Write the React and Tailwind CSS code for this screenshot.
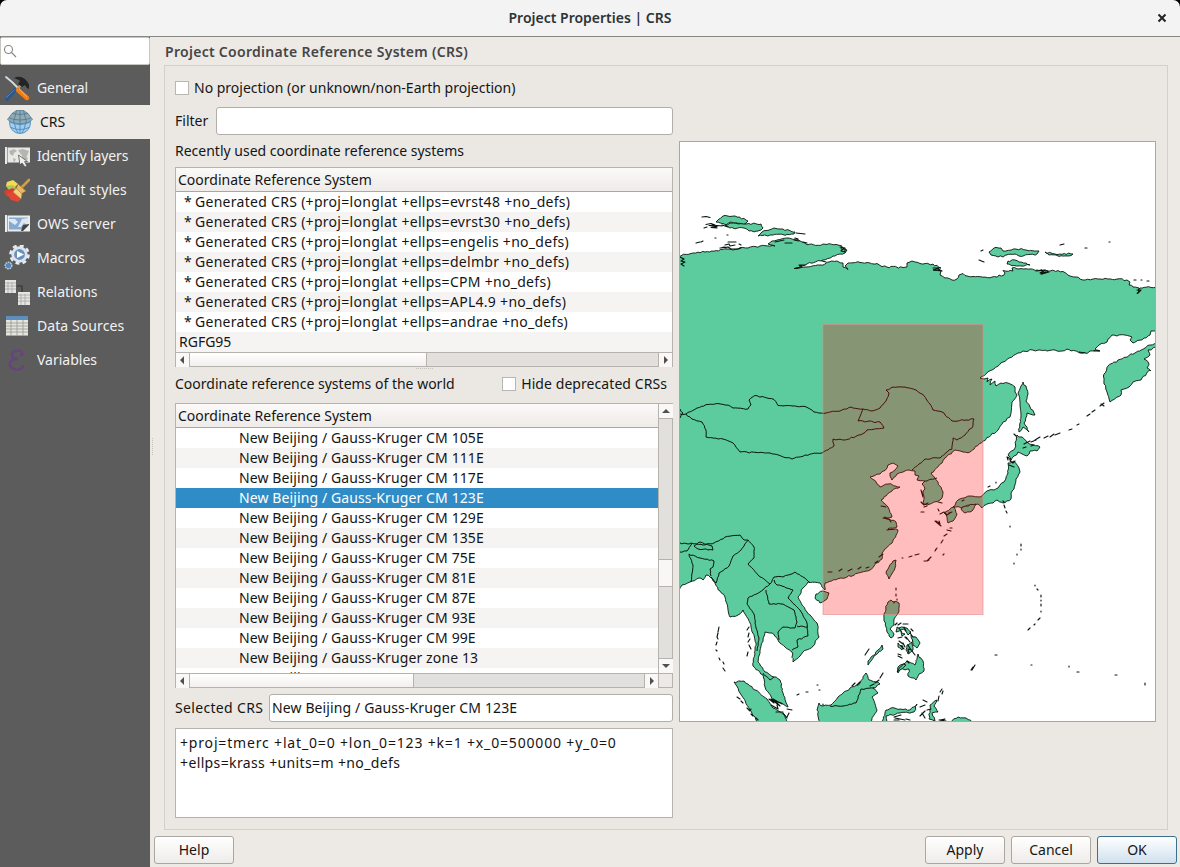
import React from "react";

const recent = ["evrst48", "evrst30", "engelis", "delmbr", "CPM", "APL4.9", "andrae"];
const world = ["CM 105E", "CM 111E", "CM 117E", "CM 123E", "CM 129E", "CM 135E", "CM 75E", "CM 81E", "CM 87E", "CM 93E", "CM 99E", "zone 13", "zone 14"];

/* Turns a coarse outline into a slightly ragged coastline. */
function rough(text, amount = 1.1, close = true) {
  const pts = text.trim().split(/\s+/).map((p) => p.split(",").map(Number));
  let seed = 7;
  const rnd = () => {
    seed = (seed * 16807) % 2147483647;
    return seed / 2147483647 - 0.5;
  };
  const out = [];
  const n = pts.length;
  for (let i = 0; i < (close ? n : n - 1); i++) {
    const [ax, ay] = pts[i];
    const [bx, by] = pts[(i + 1) % n];
    out.push(`${ax},${ay}`);
    const steps = Math.floor(Math.hypot(bx - ax, by - ay) / 2.2);
    if ((ax <= 680 && bx <= 680) || (ay >= 721 && by >= 721) || (ax >= 1155 && bx >= 1155)) continue;
    for (let k = 1; k < steps; k++) {
      const t = k / steps;
      out.push(`${(ax + (bx - ax) * t + rnd() * amount).toFixed(1)},${(ay + (by - ay) * t + rnd() * amount * 1.5).toFixed(1)}`);
    }
  }
  if (!close) out.push(pts[n - 1].join(","));
  return "M" + out.join("L") + (close ? "Z" : "");
}

const mainland = `679,255.7 693,253 705,252 727,249 733,250 740,247.7 748,248 760,246 775,246 768,244 772,241 780,239.5 787,238 797,239 802,242 807,244.7 827,244.5 838,245 842,246 841,249 847,250 845,253 840,254 833,256 823,260 807,264 794,268.5 806,267 820,265 829,262 837,261 843,263 843,267 848,269.5 845,266 848,263 860,262.5 877,263.5 882,266.7 903,267.5 907,267 907,263 912,261 920,263.5 933,264 941,268 933,270 941,271 940,275 945,278 952,280 957,279 959,275 963,273.5 967,276 973,276.5 992,277 1004,275 1005,273 1003,270.5 1013,271 1012,268 1037,270 1048,271 1041,274 1050,271 1063,271.5 1070,276 1076,277 1083,280 1100,279 1117,279 1127,280 1130,282 1129,285 1133,287 1139,288 1137,294 1140,288 1156,287 1156,331 1151,331 1150,335 1144,338 1133,343 1130,340 1132,337 1125,335 1117,336 1112,335 1107,342 1099,345 1095,349 1100,351 1090,351 1087,353.5 1078,352 1067,349 1062,351 1055,350 1047,351 1040,350 1023,351 1018,353 1003,362 992,370 980,378 984,379 988,378 987,382 992,379 990,385 995,381 996,386 1001,383 1008,383 1015,387 1015,392 1017,395 1012,402 1010,417 1003,422 998,430 983,441 970,452 963,452 955,450 945,458 942,463 931,473 938,482 943,492 942,498 940,500 934,502 930,504 927,505 923,503 924,497 923,491 925,489 922,484 925,481 917,480 919,476 915,475 915,471 909,470 903,472 897,474 892,480 890,476 890,473 895,470 898,466 893,463 888,465 887,468 880,474 870,477 874,480 880,487 888,484 900,487 892,491 881,500 888,507 892,517 884,517 896,522 897,527 888,529 898,530 892,543 882,553 882,559 870,570 847,577 825,583 825,590 822,587 820,583 808,582 803,588 798,597 807,612 817,623 819,637 813,646 803,652 800,656 793,662 792,652 785,647 778,640 772,633 765,632 760,650 758,662 765,672 780,680 783,693 788,707 783,704 773,700 765,687 763,675 753,666 756,643 750,623 743,610 738,615 730,617 725,597 720,591 710,577 706,575 703,580 699,578 690,582 682,585 679,590`;

const islands = [
  "719,219 723,216 735,216 748,221 745,224 731,222 726,225 716,222",
  "725,225 733,223 746,224 761,224 763,228 758,231 749,231 744,228 730,228",
  "758,236 762,232 774,228 780,229 795,232 794,234 770,235",
  "989,252 994,248 1001,248 1003,251 1016,249 1026,250 1039,251 1037,254 1019,256 1015,254 998,257 991,255",
  "1045,252 1055,254 1073,254 1068,256 1049,255",
  "1008,261 1015,260 1030,265 1018,266 1007,264",
  "1156,343 1150,345 1135,353 1118,360 1108,366 1104,374 1104,384 1107,392 1110,402 1121,395 1121,390 1129,387 1133,382 1141,380 1142,378 1150,370 1151,371 1147,368 1149,364 1146,360 1144,359 1150,355 1148,350 1156,347",
  "1023,382 1026,386 1028,394 1026,401 1030,407 1035,415 1027,413 1024,423 1029,432 1023,427 1019,432 1021,415 1020,402 1018,393 1021,386",
  "1017,435 1022,437 1028,443 1040,447 1037,451 1030,451 1027,456 1018,452 1014,456 1011,460 1008,455 1015,448",
  "1008,463 1014,461 1019,468 1020,472 1016,479 1014,489 1011,493 1011,499 1003,503 997,500 993,503 987,504 982,508 978,504 970,505 961,508 953,507 958,500 970,496 980,497 987,491 998,488 1004,482 1008,473",
  "966,506 976,504 972,511 965,513 961,509",
  "947,511 954,507 957,514 953,521 948,523 947,517 944,513",
  "888,569 893,561 896,560 895,568 889,579 886,573",
  "816,594 823,591 829,593 827,599 820,603 815,598",
  "888,602 891,600 899,603 899,611 894,619 894,625 890,629 894,634 891,638 887,632 884,619 884,614",
  "897,627 907,628 911,632 908,635 904,629 896,632", "915,637 918,642 915,646 912,638",
  "898,643 903,646 902,650 898,647", "907,645 912,642 913,650 908,654 906,650",
  "918,654 923,661 924,671 919,674 916,680 908,676 909,669 900,669 898,673 898,667 907,661 915,665",
  "882,645 883,649 874,656 868,665 868,661 878,650",
  "734,682 744,681 755,690 767,699 773,708 785,715 787,722 757,722 750,710 740,693",
  "819,703 823,706 831,705 838,697 850,688 860,683 866,673 869,680 880,684 873,688 878,693 872,697 877,710 870,722 820,722 817,710",
  "886,710 891,708 910,710 917,704 914,712 900,713 886,716 887,722 882,722",
  "930,705 937,700 934,706 938,712 932,713 935,721 929,719", "950,722 958,717 966,718 972,722",
  "911,635 916,637 920,643 917,648 913,645", "901,631 905,634 902,636", "897,672 903,664 906,665 900,670",
];

const borders = [
  "680,409 683,413 680,418", "680,414 686,414 697,408 708,404.5 718,403.5 728,405 733,408 748,409 751,405 749,400 755,395.5 774,399.5 778,405.5 793,406 805,406.5 814,412 826,413 840,411 851,407 863,409 872,411 880,408 886,401 889,393 886,390 893,387 905,387 916,390 922,394 930,404 933,410 942,412 952,421 966,420 974,419 973,426 965,435 957,440 953,438 952,449 947,452 940,458 925,459 919,464 912,470",
  "686,414 692,419 702,422 706,430 706,437 723,439 733,443 740,452 770,453 792,459 805,455 822,453 834,446 833,439 845,440 860,435 867,430 884,428 880,422 858,421 863,409",
  "925,481 937,478", "680,543 689,544 691,543 703,545 714,543 725,537 740,535 744,540 748,540 754,547 754,558 748,564 758,575 770,584 774,577 783,577 795,572 807,580 810,583",
  "694,546 700,542 712,546 713,550 698,549 694,546", "680,552 687,551 692,543", "689,554 700,558 714,561 713,567 710,569 711,576", "689,554 693,565 691,582", "748,540 741,550 733,556 729,566 719,573 716,583 711,577",
  "770,584 760,592 748,598 747,604 754,614 756,628 759,638 757,651", "766,590 769,604 783,604 794,610 797,622 795,628 783,627 778,632 779,640", "774,580 777,585 782,586 793,590 788,598 800,610 807,623 808,636 797,640 798,647 792,650", "797,626 808,627", "763,673 770,680 774,677", "830,706 843,706 856,703 861,689 874,688",
];

const specks = "M702 217l4-.5 4 1m-4 7l5-1 4 1.5-6 .5 8 1-6 1 6 .5-5-3 10 1m-18 2l3-1m15-2 6 2m-32 16 4-1m1 0 2-1m12-3h1m11-3h1m-7 13 3-1 2 1m-1-3 4-1 1 2 5-1m-7-3 8 0m-16 6 8-1 3 2 7 0 3-1m-2-4 2 1m34-3 9-2m1 3 7 0m2-3 5 1m-4-3 3 1m5 3 4 1m-11-10 9 1M680 257l4 2-3 2 4 1-4 2 3 2M840 247l5 1 0 4-4-1 3-3M796 268l6-1-3-2 6 0M822 261l4 1M981 251l2-1m-4 10 5 2m76-17 4-1m21 4h2m22-6h1m24 38h2m5 0h1m5 1h2M933 268l6 0-5 2 8 1-6-3M1036 271l9-1-5 3 9-1-8 2M1137 290l4 0-3 3M1079 352l6 1m9-2 5 0M1104 403l-4 3m1-2 3 2m-9 4-3 2m-2 2-3 2m-8 8-2 1m-5 4-3 1m-9 3-5 2m-1-1-4 3m-2-1-4 2m-4-1-5 3m1 0-5 2m-1-1-6 3m10 1-3 1m-5 1-3 1M1007 457l1 3m2 1 3 2 2-2m-7-4 3 4m-2 4 5 2M1014 434l2 2M988 487l2-1m6-4v1M921 490l2 7-1-5m-1 10 3 3 4-2m-4 4 3-1m11-4 4 1m-21 9 3 0m14-3 1 2m25-11-2 1m-10 11-3 1m-13 8 4 3-1-3m-4 0 6 5m6 4 4 1m-1-3 2 0m-5 6-3 2m-1 4-2 3m-4 5-2 3 1-2m-5 8-4 4 2-1m-5 1 3 0m17-7-1 1m-3-41 4-2 3 3 3-2M1003 501l1 1m0 3 1 3m1 3 1 2m3 13v1m11 17v2m0 3v1m-4 4v1m-3 8v1m21 21v1m2 3 1 1m3 5v2m0 3v1m0 3v2m0 5v1m-1 6-2 2m-3 4-1 1m-4 3-2 2M995 655h2m34 10h1m-57 0-3 5m1-3-2 3m98-4v1m8 5 2 0m36 3h2m28 8v2M896 588v2m0 4v2m1 3v1m-3 2v1m8-45h1m6-1 3-1m3-1 4-1M719 627l-1 5m0 1-1 4 1 2m-1 3-1 3m0 5 1 1m2 7 1 2m3 2 1 2m-1 4 2 3m24-44-2 3m2 3-1 4m2 2-2 3m1 3 2 4m-3 3-1 4M737 697l3 2m1 2 2 2m4 5 3 3 1-2m0 5 2 2m3 2 2 2M769 699l5 4-3-4 9 7-7-7 9 5m-11 1 7 4-1-4m-1 7 7 0m4-3 5 1m-3 3-2 4m-4-4 4 5m10-23 2-1m7-2h2m9-7h1m1 5h1m3 14v1M852 686l3-3m2 2 3-3m9-33-4 6M895 625l2-2m1 2 3-2m2 1 5 0m-9 4 2 3m3-4 2 4m5-2 2 2m-15 7 4-1m3 0 2 2m-8 2 4 3m3-7 4 5m0-9 3 4m-10 6 2 4m3-2 3 5m-10-4 3 3m-6 5 3 1m7-5 1 3m3-2 3 4m-7-6 4 1m-14 6 4 2m5 3 2 2m-26 10-3 5m-1 2-4 3m-1 1-4 2m72 3-2 3m-1 4-1 5m5-10-1 3M894 717l7-2m-6 3 10 2m-11 0 5 0m7-1 4 1m13-20 4 2m-2 3-5 2m5 4-5 5m2-3 3 5m2-8 4-1m9 11 5-1-4 2m-2-1 7 1m15 2 5 1m2 1 3 1M881 506l5 1m-3 11 6 1 2 3m-4 8 6-1m-14 28 4-3m-8 9 3-2m-9 6-3 1m-5-1-3 2m-6 0-4 2m-6-2-3 2m-7 1-4 0";

function WorldMap() {
  return (
    <svg className="block h-full w-full" viewBox="680 142 475 579">
      <g fill="#5ccb9d" stroke="#08150f" strokeWidth="0.9" strokeLinejoin="round">
        <path d={rough(mainland, 1.2)} />
        {islands.map((d) => <path key={d} d={rough(d, 1.4)} />)}
        <g fill="none" strokeWidth="1">{borders.map((d) => <path key={d} d={rough(d, 0.9, false)} />)}</g>
        <path d={specks} fill="none" strokeWidth="1.15" strokeLinecap="round" />
      </g>
      <rect x="823" y="324.5" width="160" height="290" fill="#ff0000" fillOpacity="0.26" stroke="#e58888" strokeOpacity="0.6" strokeWidth="1" />
    </svg>
  );
}

const Icon = ({ children }) => <svg viewBox="0 0 26 26" className="h-[26px] w-[26px] shrink-0">{children}</svg>;

const icons = {
  General: <Icon><path d="M2 2 8 7 15 14" stroke="#d8dcde" strokeWidth="1.8" fill="none" strokeLinecap="round" /><path d="m18 9-5 5" stroke="#b9a27c" strokeWidth="2.2" /><path d="M10 3c5-3 12-1 15 7v4l-2-1-2-3-3 2-4-3 2-3c-2-2-4-2-6-3z" fill="#242424" /><path d="m11 15-8 9" stroke="#245a91" strokeWidth="3.8" strokeLinecap="round" /><path d="m10 15-8 8" stroke="#5189bb" strokeWidth=".9" /><path d="m14 15 9 8" stroke="#f47e13" strokeWidth="4.4" strokeLinecap="round" /><path d="m15 14 8 8" stroke="#ffb05d" strokeWidth="1" /></Icon>,
  CRS: <Icon><circle cx="13" cy="14" r="10.5" fill="#9fcdf0" stroke="#5b95c2" /><path d="M3 13q10 5 20 0M4 18.5q9 4 18 0M7.5 14q.5 6 3.5 10M18.500 14q-.5 6-3.500 10M13 15v9" fill="none" stroke="#4584b5" strokeWidth=".8" /><path d="M.5 10.500 5 4.500 9.500 1.500h7l4.500 3 4.500 6-4.500 3-8 1.500-8-1.500z" fill="#8eabb9" stroke="#5c7f92" strokeWidth=".8" /><path d="m9.500 1.500-3 12m10-12 3 12M13 1.500V15M5 4.500q8 2 16 0M2 9q11 4 22 0" fill="none" stroke="#4e6f82" strokeWidth=".7" /></Icon>,
  "Identify layers": <Icon><path d="M1 4h2v17H1zM3.500 4.500H26v15H3.500z" fill="#e8e8e5" /><path d="m5 8 5-2 3 2-3 2-1 3-3-2zm4 7 3 1-2 4zm5-8 5-1 6 2-2 5-4 1-3-4zm4 6 4-1 2 4-5 3z" fill="#b5b5b2" /><path d="m14.500 12 1.500 10 2-2 3 4 2-1-2.500-4.500h3z" fill="#eee" stroke="#555" strokeWidth=".8" /></Icon>,
  "Default styles": <Icon><path d="m3 5 6-2 5 4-5 5-7-3z" fill="#f3dc4e" /><path d="m2 9 7-1 3 3-6 4z" fill="#a9c763" /><path d="m0 14 9-3 5 4-4 5-8-1z" fill="#d9402c" /><path d="m3 17 8-4 7 8-4 4-7-2z" fill="#e34635" /><path d="M18 10 25 3" stroke="#d99a40" strokeWidth="2.600" strokeLinecap="round" /><path d="m14 7 8 7-5 3-5-5z" fill="#e7b85c" stroke="#a0742d" strokeWidth=".6" /><path d="m12 11 6 6-1 5-8-7z" fill="#f2d07f" stroke="#aa7c34" strokeWidth=".6" /></Icon>,
  "OWS server": <Icon><path d="M1 4h2v17H1zM3.500 4.500H26v16H3.500z" fill="#e9edf0" /><path d="M5 6.500h19v12H5z" fill="#86abd2" /><path d="m5 8 6 0 3 3-3 3-6-4zm9 8 4-8 6-1v8l-4-3-3 4z" fill="#dfe8f0" /><path d="m17 20 2-6 6-1-1 7z" fill="#444" /><path d="m19 20 6-6v6z" fill="#eee" /></Icon>,
  Macros: <Icon><g transform="translate(15.500 9.500)"><circle r="9" fill="none" stroke="#e9edf1" strokeWidth="2.600" strokeDasharray="3.900 3.169" /><circle r="6.800" fill="#6792bf" stroke="#dde4ed" strokeWidth="2.800" /><path d="m-2.500-3.500 7 3.500-7 3.500z" fill="#fff" /></g><circle cx="4.500" cy="20.500" r="3.300" fill="#5688b6" stroke="#b9cbdc" strokeWidth="1.400" strokeDasharray="1.700 .7" /></Icon>,
  Relations: <Icon><path d="M13 7h5v6" fill="none" stroke="#333" strokeWidth="1.2" /><path d="M1 1h11v13H1zm13 12h12v13H14z" fill="#e5e5e3" /><path d="M1 4h11M1 7h11M1 10h11M4 3v11m4-11v11M14 16h12m-12 3h12m-12 3h12M17 15v11m4-11v11" stroke="#a4a4a2" strokeWidth=".8" /></Icon>,
  "Data Sources": <Icon><path d="M2 3h22v20H2z" fill="#e5e5df" /><path d="M2 3h22v4H2z" fill="#5c8ebe" /><path d="M2 10h22M2 13h22M2 16h22M2 19h22M2 22.500h22M7 7v16m6-16v16m6-16v16" stroke="#96978f" strokeWidth=".8" /></Icon>,
  Variables: <Icon><path d="M18.500 8C18.500 3 14 3 10.500 4 6 6 7 11.500 14 12 5 11.500 4 18 8 21c5 3.500 11 1 11-3" fill="none" stroke="#67447b" strokeWidth="2.400" /><circle cx="17.500" cy="8" r="1.600" fill="#67447b" /></Icon>,
};

const labelTracking = {
  General: "tracking-[-0.1px]",
  "Identify layers": "tracking-[-0.13px]",
  "Default styles": "tracking-[0.07px]",
  "OWS server": "tracking-[0.28px]",
  "Data Sources": "tracking-[0.08px]",
};

const arrows = { left: "M8 3v8L4 7z", right: "M5 3v8l4-4z", up: "M3 9h8L7 5z", down: "M3 5h8L7 9z" };
const Arrow = ({ dir, className = "w-[14px]" }) => <svg viewBox="0 0 14 14" preserveAspectRatio="xMinYMin slice" className={`h-[14px] shrink-0 bg-[#f9f8f7] ${className}`}><path d={arrows[dir]} fill="#50504d" /></svg>;

const HBar = ({ thumb }) => (
  <div className="flex h-[14px] w-full border-t border-[#b6b3ae] bg-[#e2e0dd]">
    <Arrow dir="left" className="w-[13px]" />
    <div className={`h-full border-x border-[#b6b3ae] bg-linear-to-b from-white to-[#f2f0ee] ${thumb}`} />
    <div className="flex-1" />
    <div className="border-l border-[#b6b3ae]"><Arrow dir="right" className="w-[13px]" /></div>
  </div>
);

const Header = () => <div className="flex h-6 shrink-0 items-center border-b border-[#aaa7a2] bg-linear-to-b from-[#fbfaf8] to-[#eeebe8] pl-[2px]">Coordinate Reference System</div>;
const Check = () => <span className="h-[14px] w-[14px] shrink-0 border border-[#bab7b2] bg-white" />;
const Button = ({ children, className = "border-[#aaa7a2] to-[#eeece9]" }) => <button className={`h-7 w-20 rounded-[3px] border bg-linear-to-b from-white ${className}`}>{children}</button>;

export default function App() {
  return (
    <div className="flex h-[867px] w-[1180px] flex-col overflow-hidden bg-black font-['Noto_Sans',sans-serif] text-[14px] leading-5 whitespace-nowrap text-[#151515]">
      <header className="flex h-[37px] shrink-0 items-center rounded-t-[7px] border-b border-[#898784] bg-[#f3f3f3]">
        <div className="w-[23px]" />
        <h1 className="flex-1 text-center font-semibold text-[#2d3436]">Project Properties | CRS</h1>
        <svg className="mr-[13px] h-[10px] w-[10px]" viewBox="0 0 10 10"><path d="m1.5 1.5 7 7m0-7-7 7" stroke="#222" strokeWidth="2" /></svg>
      </header>
      <div className="flex min-h-0 flex-1 bg-[#edeae6]">
        <aside className="w-[150px] shrink-0 bg-[#5c5c5c]">
          <div className="mb-[6px] flex h-[28px] items-center rounded-[2px] border border-[#c9c6c2] bg-white pl-[2px]">
            <svg className="h-[14px] w-[14px]" viewBox="0 0 14 14" fill="none" stroke="#858585" strokeWidth="1.1"><circle cx="5.5" cy="5.5" r="4" /><path d="m8.5 8.5 4.5 4.5" /></svg>
          </div>
          {Object.keys(icons).map((name) => (
            <div key={name} className={`flex h-[34px] items-center ${name === "CRS" ? "gap-[7px] bg-[#edeae6] pl-[7px]" : "gap-[7px] pl-1 text-[#f2f2f2]"}`}>{icons[name]}<span className={labelTracking[name]}>{name}</span></div>
          ))}
        </aside>
        <div className="flex w-[4px] shrink-0 items-center pl-[2px]"><div className="mb-3 h-[17px] border-l border-dotted border-[#c4c1bc]" /></div>
        <main className="flex min-w-0 flex-1 flex-col">
          <h2 className="ml-[11px] flex h-[28px] items-center pt-[2px] font-semibold tracking-[0.29px] text-[#464646]">Project Coordinate Reference System (CRS)</h2>
          <section className="ml-[10px] flex h-[765px] w-[1004px] shrink-0 border border-[#d3d0cb] bg-[#ebe8e4] pl-[10px]">
            <div className="flex w-[498px] shrink-0 flex-col">
              <div className="mt-3 flex h-5 items-center gap-[5px]"><Check /><span>No projection (or unknown/non-Earth projection)</span></div>
              <div className="mt-[9px] flex h-7 items-center"><span className="w-[41px]">Filter</span><div className="h-7 flex-1 rounded-[3px] border border-[#b2afaa] bg-white" /></div>
              <div className="mt-[6px] h-5">Recently used coordinate reference systems</div>
              <div className="mt-[6px] flex h-[200px] shrink-0 flex-col border border-[#b6b3ae] bg-white">
                <Header />
                {recent.map((name) => <div key={name} className="flex h-5 bg-white pl-2 odd:bg-[#f6f4f3]"><span className="w-[11px]">*</span><span className="tracking-[0.29px]">Generated CRS (+proj=longlat +ellps={name} +no_defs)</span></div>)}
                <div className="h-5 bg-[#f6f4f3] pl-[3px]">RGFG95</div>
                <HBar thumb="w-[238px]" />
              </div>
              <div className="flex h-[4px] justify-center"><div className="mt-[1px] w-[17px] border-t border-dotted border-[#c4c1bc]" /></div>
              <div className="mt-[3px] flex h-5 items-center justify-between pr-[6px]"><span>Coordinate reference systems of the world</span><span className="flex items-center gap-[5px] tracking-[0.07px]"><Check />Hide deprecated CRSs</span></div>
              <div className="mt-[9px] flex h-[285px] shrink-0 flex-col border border-[#b6b3ae] bg-white">
                <div className="flex h-[269px] shrink-0">
                  <div className="w-[482px] overflow-hidden">
                    <Header />
                    {world.map((name) => <div key={name} className={`h-5 pl-[63px] tracking-[0.11px] ${name === "CM 123E" ? "bg-[#308cc6] text-white" : "even:bg-white odd:bg-[#f6f4f3]"}`}>New Beijing / Gauss-Kruger {name}</div>)}
                  </div>
                  <div className="flex w-[14px] flex-col border-l border-[#b6b3ae] bg-[#e2e0dd]">
                    <Arrow dir="up" />
                    <div className="h-[141px] border-t border-[#b6b3ae]" />
                    <div className="h-7 border-y border-[#b6b3ae] bg-[#f8f7f5]" />
                    <div className="flex-1 border-b border-[#b6b3ae]" />
                    <Arrow dir="down" />
                  </div>
                </div>
                <div className="flex"><div className="w-[482px]"><HBar thumb="w-[225px]" /></div><div className="flex-1 border-t border-l border-[#b6b3ae] bg-[#edeae6]" /></div>
              </div>
              <div className="mt-[6px] flex h-7 items-center"><span className="w-[94px] tracking-[0.33px]">Selected CRS</span><div className="flex h-7 flex-1 items-center rounded-[3px] border border-[#b2afaa] bg-white pl-[2px] tracking-[0.12px]">New Beijing / Gauss-Kruger CM 123E</div></div>
              <div className="mt-[6px] h-[90px] border border-[#b6b3ae] bg-white px-1 pt-1"><span className="tracking-[0.83px]">+proj=tmerc +lat_0=0 +lon_0=123 +k=1 +x_0=500000 +y_0=0</span><br /><span className="tracking-[0.37px]">+ellps=krass +units=m +no_defs</span></div>
            </div>
            <div className="mt-[75px] ml-[6px] h-[581px] w-[477px] border border-[#aaa7a2] bg-white"><WorldMap /></div>
          </section>
          <footer className="mt-[6px] flex gap-[6px] pr-[3px]"><Button>Help</Button><div className="flex-1" /><Button>Apply</Button><Button>Cancel</Button><Button className="border-[#3d6f91] to-[#cfe1ee]">OK</Button></footer>
        </main>
      </div>
    </div>
  );
}
